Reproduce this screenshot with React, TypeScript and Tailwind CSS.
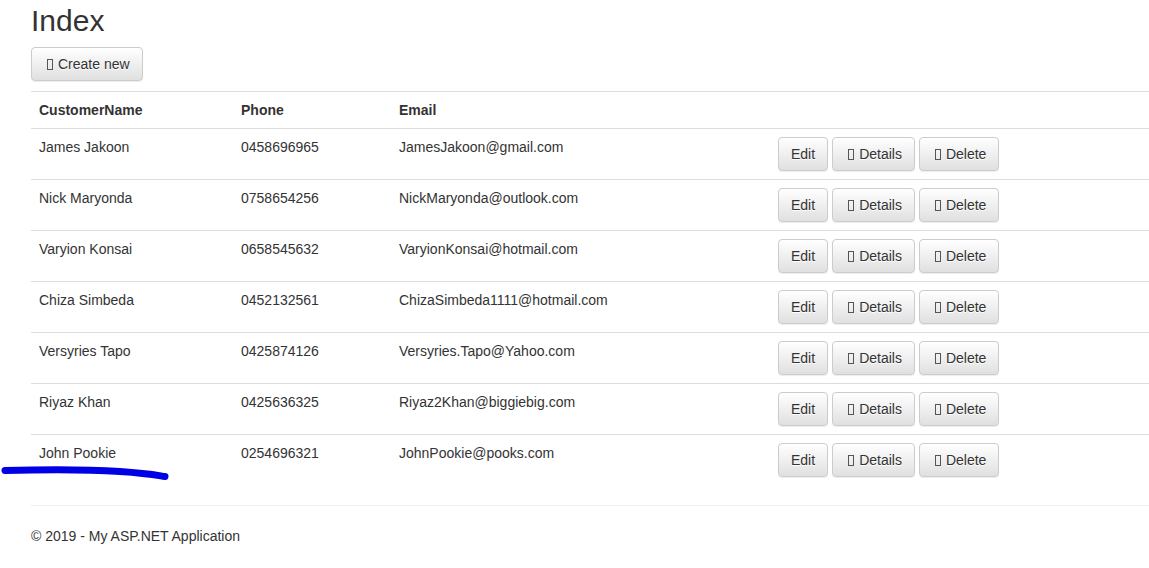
import React from "react";

const customers = [
  { name: "James Jakoon", phone: "0458696965", email: "JamesJakoon@gmail.com" },
  { name: "Nick Maryonda", phone: "0758654256", email: "NickMaryonda@outlook.com" },
  { name: "Varyion Konsai", phone: "0658545632", email: "VaryionKonsai@hotmail.com" },
  { name: "Chiza Simbeda", phone: "0452132561", email: "ChizaSimbeda1111@hotmail.com" },
  { name: "Versyries Tapo", phone: "0425874126", email: "Versyries.Tapo@Yahoo.com" },
  { name: "Riyaz Khan", phone: "0425636325", email: "Riyaz2Khan@biggiebig.com" },
  { name: "John Pookie", phone: "0254696321", email: "JohnPookie@pooks.com" },
];

const btn =
  "inline-flex items-center h-[34px] px-[12px] rounded-[4px] border border-[#ccc] bg-gradient-to-b from-white to-[#e0e0e0] text-[14px] text-[#333] [text-shadow:0_1px_0_#fff] shadow-[inset_0_1px_0_rgba(255,255,255,0.15),0_1px_1px_rgba(0,0,0,0.075)]";

// missing glyphicon font renders as a box
const Tofu = () => (
  <span className="inline-block ml-[3px] w-[6px] h-[11px] border border-[#555] mr-[5px]" />
);

const cols = "grid grid-cols-[202px_158px_379px_1fr]";

export default function App() {
  return (
    <div className="relative bg-white min-h-[568px] font-['Liberation_Sans',Arial,sans-serif] text-[14px] leading-[20px] text-[#333]">
      <div className="pl-[31px]">
        <h2 className="pt-[4px] text-[30px] leading-[33px] font-normal">Index</h2>
        <div className="mt-[10px] mb-[10px]">
          <button className={btn}>
            <Tofu />
            Create new
          </button>
        </div>

        <div className="border-t border-[#ddd]">
          <div className={`${cols} border-b border-[#ddd] font-bold`}>
            <div className="px-[8px] py-[8px]">CustomerName</div>
            <div className="px-[8px] py-[8px]">Phone</div>
            <div className="px-[8px] py-[8px]">Email</div>
            <div />
          </div>
          {customers.map((c, i) => (
            <div key={i} className={`${cols} ${i > 0 ? "border-t border-[#ddd]" : ""}`}>
              <div className="p-[8px]">{c.name}</div>
              <div className="p-[8px]">{c.phone}</div>
              <div className="p-[8px]">{c.email}</div>
              <div className="p-[8px] flex gap-[4px]">
                <button className={btn}>Edit</button>
                <button className={btn}>
                  <Tofu />
                  Details
                </button>
                <button className={btn}>
                  <Tofu />
                  Delete
                </button>
              </div>
            </div>
          ))}
        </div>

        <hr className="mt-[20px] border-t border-[#eee]" />
        <footer className="mt-[20px]">
          <p>© 2019 - My ASP.NET Application</p>
        </footer>
      </div>

      {/* pen mark under the last name */}
      <svg className="absolute left-0 top-[460px]" width="180" height="25" viewBox="0 0 180 25">
        <path
          d="M5 10.5 C 40 9.5, 90 9.5, 120 11.5 S 158 15.5, 165 16.5"
          stroke="#0000e6"
          strokeWidth="7"
          strokeLinecap="round"
          fill="none"
        />
      </svg>
    </div>
  );
}
